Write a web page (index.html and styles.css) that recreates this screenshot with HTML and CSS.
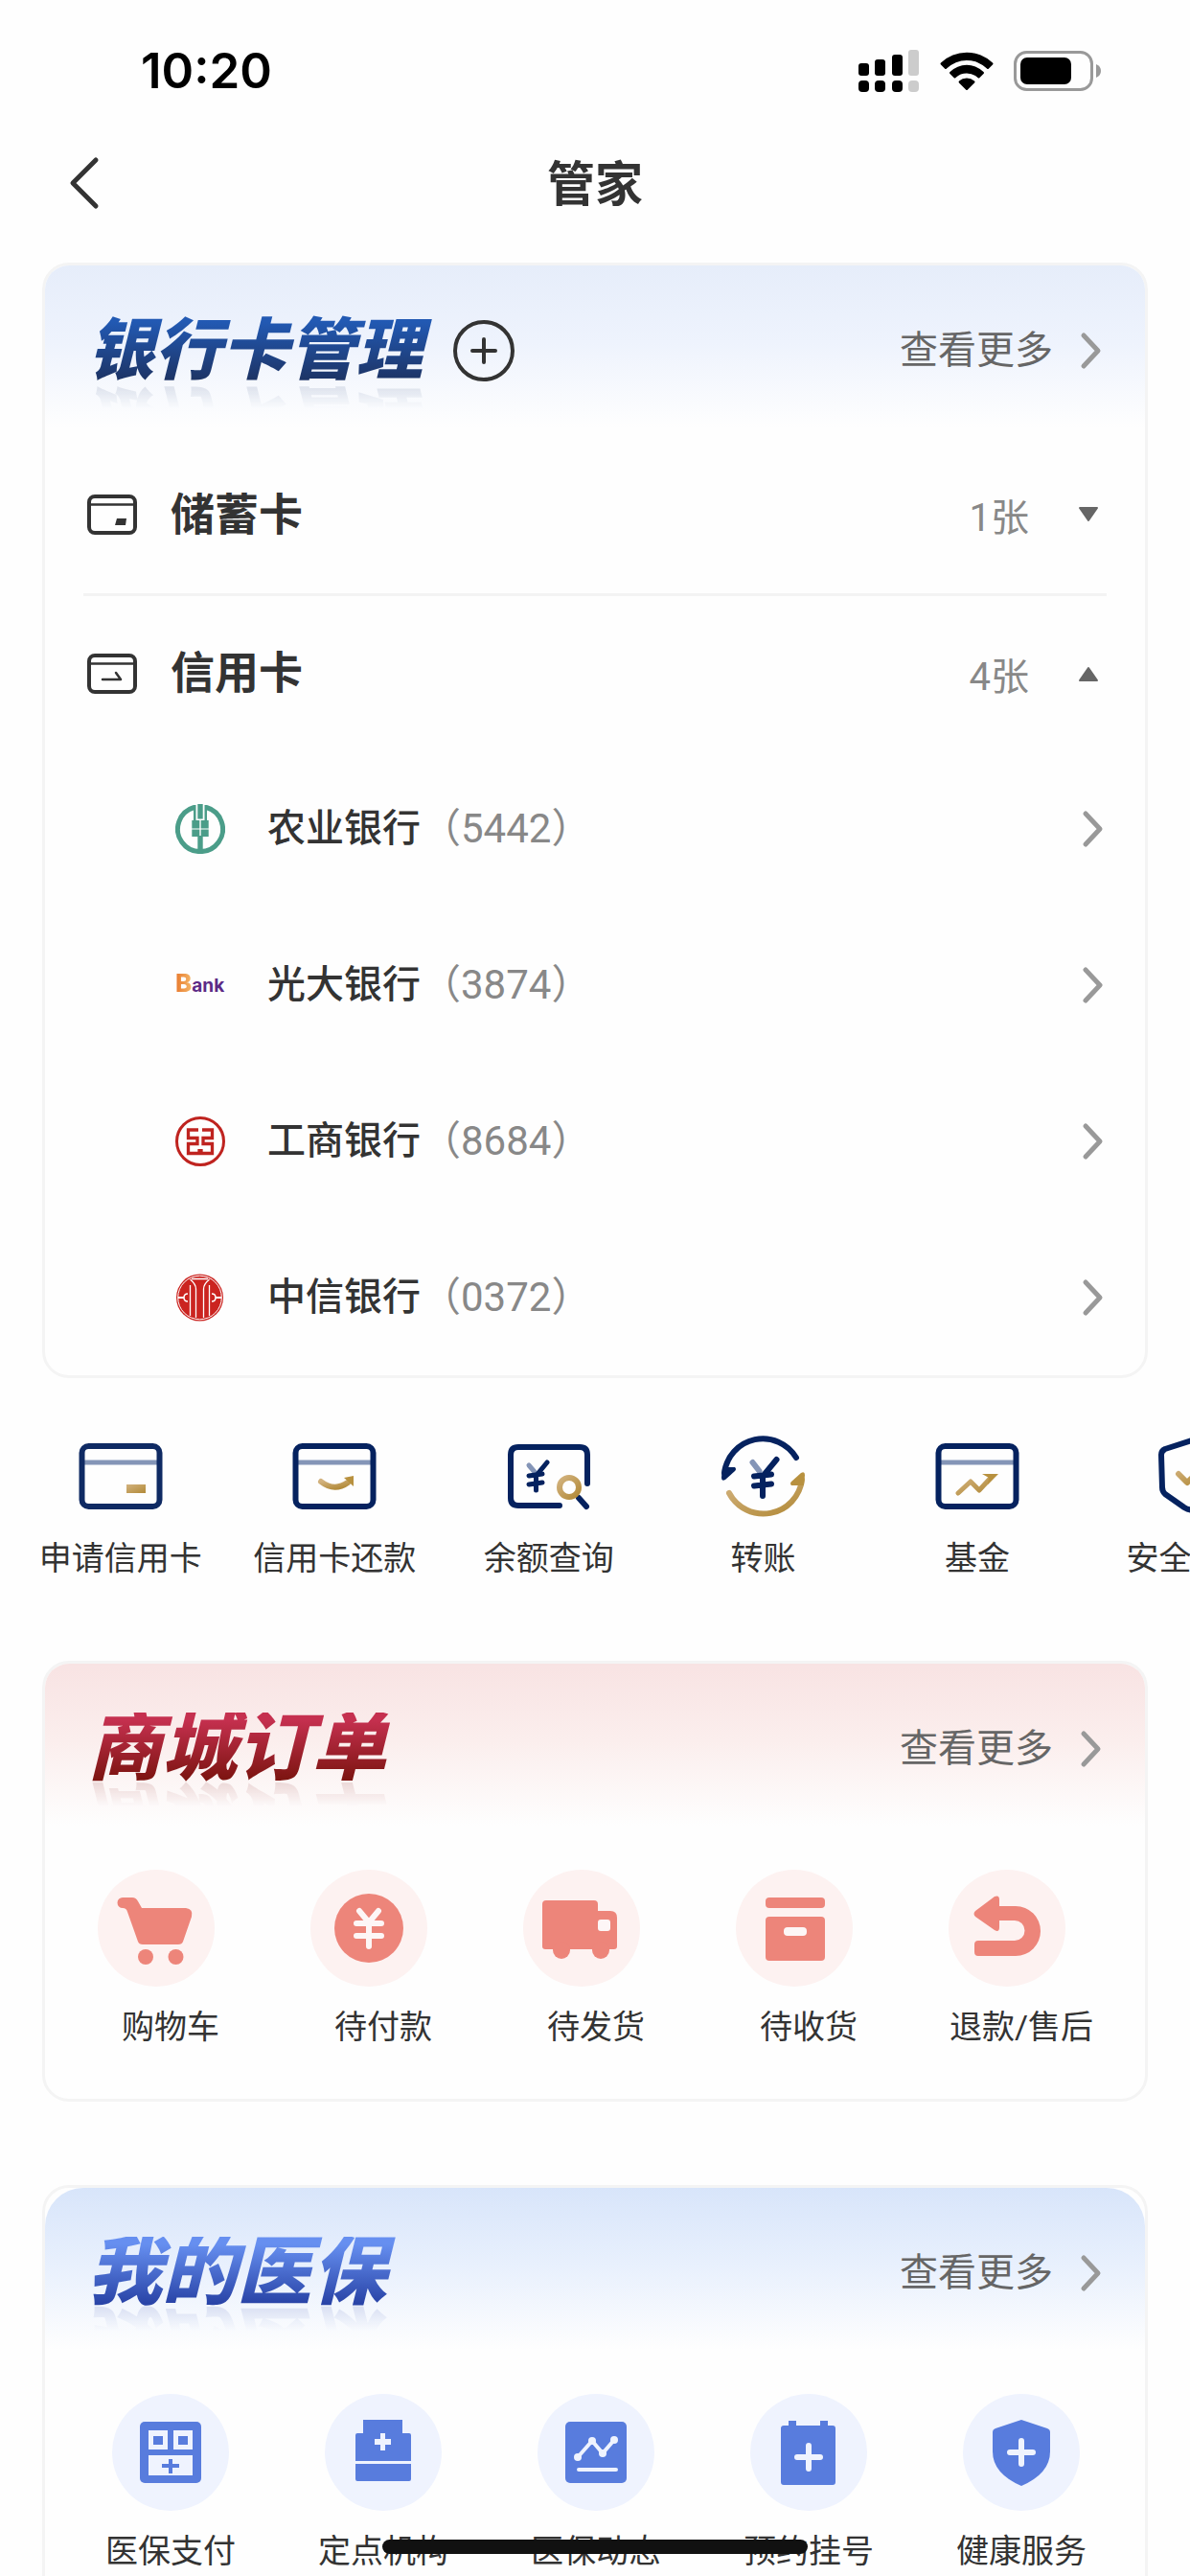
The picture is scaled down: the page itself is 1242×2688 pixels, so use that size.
FILE: index.html
```html
<!DOCTYPE html>
<html lang="zh-CN">

<head>
    <meta charset="UTF-8">
    <meta name="viewport" content="width=device-width, initial-scale=1.0">
    <title>管家</title>
    <link rel="stylesheet" href="styles.css">
</head>

<body>
    <!-- shared gradients and symbols -->
    <svg class="defs" width="0" height="0" aria-hidden="true">
        <defs>
            <linearGradient id="gold" x1="0" y1="0" x2="1" y2="1">
                <stop offset="0" stop-color="#d2b27e" />
                <stop offset="1" stop-color="#b28a38" />
            </linearGradient>
            <symbol id="chevron" viewBox="0 0 24 40">
                <path d="M4 4l15 16L4 36" fill="none" stroke="#999" stroke-width="5" stroke-linecap="round"
                    stroke-linejoin="round" />
            </symbol>
        </defs>
    </svg>

    <div class="screen">
        <!-- Status bar -->
        <div class="status-bar">
            <span class="time">10:20</span>
            <div class="status-icons">
                <svg width="64" height="46" viewBox="0 0 64 46">
                    <rect x="0" y="15" width="11" height="13" rx="3" />
                    <rect x="17" y="11" width="11" height="17" rx="3" />
                    <rect x="35" y="6" width="11" height="22" rx="3" />
                    <rect x="52" y="1" width="11" height="27" rx="3" fill="#ccc" />
                    <rect x="0" y="33" width="11" height="12" rx="4" />
                    <rect x="17" y="33" width="11" height="12" rx="4" />
                    <rect x="35" y="33" width="11" height="12" rx="4" />
                    <rect x="52" y="33" width="11" height="12" rx="4" fill="#ccc" />
                </svg>
                <svg width="56" height="46" viewBox="0 0 56 46">
                    <path d="M1 14.500a39 39 0 0 1 54 0q1 1 0 2l-4 4q-1 1-2 0a30 30 0 0 0-42 0q-1 1-2 0l-4-4q-1-1 0-2z" />
                    <path d="M10.500 24a25 25 0 0 1 35 0q1 1 0 2l-4 4q-1 1-2 0a17 17 0 0 0-23 0q-1 1-2 0l-4-4q-1-1 0-2z" />
                    <path d="M20 33.500a12 12 0 0 1 16 0q1 1 0 2l-7 7q-1 1-2 0l-7-7q-1-1 0-2z" />
                </svg>
                <svg width="92" height="46" viewBox="0 0 92 46">
                    <rect x="1.500" y="3.500" width="80" height="39" rx="12" fill="none" stroke="#999" stroke-width="3" />
                    <rect x="7" y="9" width="53" height="28" rx="7" />
                    <path d="M86 16q5 2 5 7t-5 7z" fill="#999" />
                </svg>
            </div>
        </div>

        <!-- Title bar -->
        <header class="nav">
            <button class="back" type="button" aria-label="返回">
                <svg width="32" height="56" viewBox="0 0 32 56">
                    <path d="M28 4L4 28l24 24" fill="none" stroke="#333" stroke-width="5" stroke-linecap="round"
                        stroke-linejoin="round" />
                </svg>
            </button>
            <h1>管家</h1>
        </header>

        <!-- Bank cards -->
        <section class="card card-bank">
            <div class="card-head">
                <h2 class="card-title">银行卡管理</h2>
                <button class="add" type="button" aria-label="添加">
                    <svg width="64" height="64" viewBox="0 0 64 64">
                        <circle cx="32" cy="32" r="30" fill="none" stroke="#333" stroke-width="4" />
                        <path d="M32 20v24M20 32h24" stroke="#333" stroke-width="4" stroke-linecap="round" />
                    </svg>
                </button>
                <a class="more" href="#">查看更多<svg width="24" height="40"><use href="#chevron" /></svg></a>
            </div>

            <button class="group" type="button">
                <svg width="52" height="42" viewBox="0 0 52 42">
                    <rect x="2" y="2" width="48" height="38" rx="6" fill="none" stroke="#333" stroke-width="4" />
                    <path d="M3 10.500h46" stroke="#333" stroke-width="2.500" />
                    <path d="M31 25h10l-1 7H29z" fill="#333" />
                </svg>
                <span class="group-name">储蓄卡</span>
                <span class="count">1张</span>
                <svg width="24" height="18" viewBox="0 0 24 18">
                    <path d="M3 2h18L12 15z" fill="#666" stroke="#666" stroke-width="2" stroke-linejoin="round" />
                </svg>
            </button>
            <button class="group" type="button">
                <svg width="52" height="42" viewBox="0 0 52 42">
                    <rect x="2" y="2" width="48" height="38" rx="6" fill="none" stroke="#333" stroke-width="4" />
                    <path d="M3 10.500h46" stroke="#333" stroke-width="2.500" />
                    <path d="M16 27h19l-5-7" fill="none" stroke="#333" stroke-width="2.500" stroke-linecap="round"
                        stroke-linejoin="round" />
                </svg>
                <span class="group-name">信用卡</span>
                <span class="count">4张</span>
                <svg width="24" height="18" viewBox="0 0 24 18">
                    <path d="M3 16h18L12 3z" fill="#666" stroke="#666" stroke-width="2" stroke-linejoin="round" />
                </svg>
            </button>

            <a class="bank" href="#">
                <svg width="52" height="52" viewBox="0 0 52 52">
                    <path d="M19.500 3.500a23.500 23.500 0 1 0 13 0" fill="none" stroke="#4b9d89" stroke-width="5" />
                    <g fill="#4b9d89">
                        <path d="M19 1h2.500v16h3.800v8.500h-8V17H19zM33 1h-2.500v16h-3.800v8.500h8V17H33z" />
                        <rect x="23.300" width="5.400" height="15.500" />
                        <rect x="17.300" y="26.500" width="8" height="7.500" />
                        <rect x="26.700" y="26.500" width="8" height="7.500" />
                        <rect x="23.300" y="33" width="5.400" height="17" />
                    </g>
                </svg>
                <span class="bank-name">农业银行</span>
                <span class="bank-no">（5442）</span>
                <svg width="24" height="40"><use href="#chevron" /></svg>
            </a>
            <a class="bank" href="#">
                <span class="everbright"><b>B</b>ank</span>
                <span class="bank-name">光大银行</span>
                <span class="bank-no">（3874）</span>
                <svg width="24" height="40"><use href="#chevron" /></svg>
            </a>
            <a class="bank" href="#">
                <svg width="52" height="52" viewBox="0 0 52 52" fill="none" stroke="#bf231f">
                    <circle cx="26" cy="26" r="24.500" stroke-width="3" />
                    <path d="M24 14H13.500v8.500H23v6h-9.500V38.500h11.500V34M28 14h10.500v8.500H29v6h9.500V38.500H27V34"
                        stroke-width="3.300" />
                </svg>
                <span class="bank-name">工商银行</span>
                <span class="bank-no">（8684）</span>
                <svg width="24" height="40"><use href="#chevron" /></svg>
            </a>
            <a class="bank" href="#">
                <svg width="52" height="52" viewBox="0 0 52 52">
                    <circle cx="25.500" cy="26" r="24.500" fill="#cb2420" />
                    <g fill="none" stroke="#fff">
                        <circle cx="25.500" cy="26" r="22.800" stroke-width="1" />
                        <path d="M15.500 7q6 5 6 10v30M35.500 7q-6 5-6 10v30" stroke-width="1.300" />
                        <path d="M15.500 13v32M35.500 13v32M17 6.500h17" stroke-width="1.300" />
                        <path d="M13 22q-4 0-4 4t4 4M38 22q4 0 4 4t-4 4" stroke-width="1.500" />
                        <path d="M3 26h6M42 26h6" stroke-width="2" />
                    </g>
                </svg>
                <span class="bank-name">中信银行</span>
                <span class="bank-no">（0372）</span>
                <svg width="24" height="40"><use href="#chevron" /></svg>
            </a>
        </section>

        <!-- Quick actions, scrolls sideways -->
        <nav class="actions">
            <a class="action" href="#">
                <svg width="96" height="96" viewBox="0 0 96 96" fill="none">
                    <path d="M10 34h76" stroke="#8495b7" stroke-width="5" />
                    <rect x="7.500" y="17" width="81" height="63" rx="7" stroke="#0f2a63" stroke-width="6" />
                    <rect x="54" y="57" width="20" height="9" fill="url(#gold)" />
                </svg>
                申请信用卡
            </a>
            <a class="action" href="#">
                <svg width="96" height="96" viewBox="0 0 96 96" fill="none">
                    <path d="M10 34h76" stroke="#8495b7" stroke-width="5" />
                    <rect x="7.500" y="17" width="81" height="63" rx="7" stroke="#05225f" stroke-width="6" />
                    <path d="M34 54q14 11 28 1" stroke="url(#gold)" stroke-width="6" stroke-linecap="round" />
                    <path d="M58 50l10-2v11z" fill="#b8913f" />
                </svg>
                信用卡还款
            </a>
            <a class="action" href="#">
                <svg width="96" height="96" viewBox="0 0 96 96" fill="none" stroke="#05225f" stroke-width="5"
                    stroke-linecap="round">
                    <path d="M88 56V26q0-8-8-8H16q-8 0-8 8v45q0 8 8 8h43" stroke-width="6" />
                    <path d="M27 37l6 7" stroke="#8495b7" />
                    <path d="M46 34L34.500 48V63M27 48l14-2M27 57l14-2" />
                    <path d="M79 71l8 9" stroke-width="6" />
                    <circle cx="69" cy="60" r="10" stroke="url(#gold)" stroke-width="6" />
                </svg>
                余额查询
            </a>
            <a class="action" href="#">
                <svg width="96" height="96" viewBox="0 0 96 96" fill="none" stroke="#05225f" stroke-width="6"
                    stroke-linecap="round">
                    <path d="M8 45A40.500 40.500 0 0 1 83 29" />
                    <path d="M6 39h13q2 2 0 4l-10 9q-4 2-4-2z" fill="#05225f" stroke="none" />
                    <path d="M13 66A40.500 40.500 0 0 0 89 52" stroke="url(#gold)" />
                    <path d="M91 58H78q-2-2 0-4l10-9q4-2 4 2z" fill="#b8913f" stroke="none" />
                    <path d="M37.500 34l7 9" stroke="#8495b7" />
                    <path d="M62.500 31L48 48.500V69M39 48.500l18-2M39 58.500l18-2" />
                </svg>
                转账
            </a>
            <a class="action" href="#">
                <svg width="96" height="96" viewBox="0 0 96 96" fill="none">
                    <path d="M10 34h76" stroke="#8495b7" stroke-width="5" />
                    <rect x="7.500" y="17" width="81" height="63" rx="7" stroke="#05225f" stroke-width="6" />
                    <path d="M28 66l13-12 9 9 13-14" stroke="url(#gold)" stroke-width="5" stroke-linecap="round"
                        stroke-linejoin="round" />
                    <path d="M53 46h17L59 57l1-7z" fill="#b8913f" />
                </svg>
                基金
            </a>
            <a class="action" href="#">
                <svg width="96" height="96" viewBox="0 0 96 96" fill="none" stroke-width="6" stroke-linecap="round"
                    stroke-linejoin="round">
                    <path d="M48 11L20 20q-4 2-4 6l1 34q0 4 3 7l20 14q8 5 16 0l20-14q3-3 3-7l1-34q0-4-4-6z"
                        stroke="#05225f" />
                    <path d="M34 46l9 9 19-18" stroke="url(#gold)" />
                </svg>
                安全中心
            </a>
        </nav>

        <!-- Mall orders -->
        <section class="card card-mall">
            <div class="card-head">
                <h2 class="card-title">商城订单</h2>
                <a class="more" href="#">查看更多<svg width="24" height="40"><use href="#chevron" /></svg></a>
            </div>
            <div class="grid">
                <a class="cell" href="#">
                    <svg class="cell-icon" viewBox="0 0 122 122">
                        <path d="M26 29h10q4 0 6 4l4 7h46q8 1 6 9l-9 26q-1 3-5 3H47q-4 0-5-3L31 44q-1-4-5-4a5.500 5.500 0 0 1 0-11z" />
                        <circle cx="50" cy="91" r="8" />
                        <circle cx="81.500" cy="91" r="8" />
                    </svg>
                    <span>购物车</span>
                </a>
                <a class="cell" href="#">
                    <svg class="cell-icon" viewBox="0 0 122 122">
                        <circle cx="61" cy="61" r="36" />
                        <path class="line" d="M51 43l10 12 10-12M61 55v25M48 56h26M48 69h26" />
                    </svg>
                    <span>待付款</span>
                </a>
                <a class="cell" href="#">
                    <svg class="cell-icon" viewBox="0 0 122 122">
                        <path d="M24 32h50q4 0 4 4v7h13q7 0 7 7v30q0 3-3 3H23q-3 0-3-3V36q0-4 4-4z" />
                        <circle cx="40" cy="84" r="9" />
                        <circle cx="81" cy="84" r="9" />
                        <rect class="hole" x="78" y="52" width="13" height="12" rx="3" />
                    </svg>
                    <span>待发货</span>
                </a>
                <a class="cell" href="#">
                    <svg class="cell-icon" viewBox="0 0 122 122">
                        <rect x="31" y="29" width="62" height="11" rx="4" />
                        <rect x="31" y="49" width="62" height="46" rx="4" />
                        <rect class="hole" x="50" y="60" width="24" height="9" rx="4" />
                    </svg>
                    <span>待收货</span>
                </a>
                <a class="cell" href="#">
                    <svg class="cell-icon" viewBox="0 0 122 122">
                        <path d="M28 43l20-15q5-2 5 3v7h17a26 26 0 0 1 0 52H31q-4 0-4-4v-8q0-4 4-4h38a10.500 10.500 0 0 0 0-21H53v7q0 6-5 3L28 49q-3-3 0-6z" />
                    </svg>
                    <span>退款/售后</span>
                </a>
            </div>
        </section>

        <!-- Medical insurance -->
        <section class="card card-medical">
            <div class="card-head">
                <h2 class="card-title">我的医保</h2>
                <a class="more" href="#">查看更多<svg width="24" height="40"><use href="#chevron" /></svg></a>
            </div>
            <div class="grid">
                <a class="cell" href="#">
                    <svg class="cell-icon" viewBox="0 0 122 122">
                        <rect x="29" y="29" width="64" height="64" rx="5" />
                        <path class="hole" d="M38 38h20v20H38zM64 38h20v20H64zM38 64h46v21H38z" />
                        <path d="M43 44h10v9H43zM69 44h10v9H69zM59 68h4v5h7v4h-7v6h-4v-6h-7v-4h7z" />
                    </svg>
                    <span>医保支付</span>
                </a>
                <a class="cell" href="#">
                    <svg class="cell-icon" viewBox="0 0 122 122">
                        <path d="M40 27h41v14h7q2 0 2 2v27H32V43q0-2 2-2h6zM32 73h58v16q0 2-2 2H34q-2 0-2-2z" />
                        <path class="hole" d="M58 41h5v6h6v6h-6v6h-5v-6h-6v-6h6z" />
                    </svg>
                    <span>定点机构</span>
                </a>
                <a class="cell" href="#">
                    <svg class="cell-icon" viewBox="0 0 122 122">
                        <rect x="29" y="29" width="64" height="64" rx="5" />
                        <path class="line thin" d="M42 66l15-17 11 13 12-14M43 79h39" />
                        <g class="hole">
                            <circle cx="42" cy="66" r="4" />
                            <circle cx="57" cy="49" r="4" />
                            <circle cx="68" cy="62" r="4" />
                            <circle cx="80" cy="48" r="4" />
                        </g>
                    </svg>
                    <span>医保动态</span>
                </a>
                <a class="cell" href="#">
                    <svg class="cell-icon" viewBox="0 0 122 122">
                        <path d="M35 33h5v-5h8v5h25v-5h8v5h5q3 0 3 3v56q0 3-3 3H35q-3 0-3-3V36q0-3 3-3z" />
                        <path class="line" d="M61 54v24M49 66h24" />
                    </svg>
                    <span>预约挂号</span>
                </a>
                <a class="cell" href="#">
                    <svg class="cell-icon" viewBox="0 0 122 122">
                        <path d="M61 27l27 9q3 1 3 4v20q0 23-30 36Q31 83 31 60V40q0-3 3-4z" />
                        <path class="line" d="M61 49v24M49 61h24" />
                    </svg>
                    <span>健康服务</span>
                </a>
            </div>
        </section>
    </div>

    <div class="home-indicator"></div>
</body>

</html>
```
FILE: styles.css
```css
/* styles.css */
* {
    box-sizing: border-box;
    margin: 0;
    padding: 0;
}

body {
    font-family: Roboto, "Noto Sans CJK SC", sans-serif;
    line-height: 1.5;
    background-color: #fefefe;
    color: #333;
}

a {
    color: inherit;
    text-decoration: none;
}

button {
    font-family: inherit;
    line-height: inherit;
    color: inherit;
    background: none;
    border: none;
    cursor: pointer;
}

svg {
    display: block;
    flex-shrink: 0;
}

.defs {
    position: absolute;
}

.screen {
    height: 100vh;
    overflow: hidden;
}

/* status bar */
.status-bar {
    display: flex;
    justify-content: space-between;
    align-items: center;
    height: 148px;
    padding: 0 92px 0 147px;
}

.time {
    font-family: Inter, sans-serif;
    font-size: 51px;
    font-weight: 600;
    color: #000;
}

.status-icons {
    display: flex;
    align-items: center;
    gap: 21px;
}

/* title bar */
.nav {
    display: grid;
    grid-template-columns: 1fr auto 1fr;
    align-items: center;
    height: 86px;
    padding: 0 72px;
}

.nav h1 {
    padding-top: 5px;
    font-size: 50px;
    font-weight: 700;
}

.back {
    justify-self: start;
}

/* cards */
.card {
    margin: 40px 44px 0 44px;
    border: 3px solid #f4f4f4;
    border-radius: 28px;
    overflow: hidden;
}

.card-head {
    display: flex;
    align-items: center;
    height: 178px;
    padding: 0 44px;
}

.card-bank .card-head {
    background: linear-gradient(#e6edfa, #eef3fd 45%, #fefefe 95%);
}

.card-mall .card-head {
    background: linear-gradient(#f8e3e3, #fbeeed 45%, #fefefe 95%);
}

.card-medical .card-head {
    background: linear-gradient(#d8e5fa, #e8f0fd 45%, #fefefe 95%);
    border-radius: 40px 40px 0 0;
}

.card-title {
    font-size: 78px;
    font-weight: 900;
    font-style: italic;
    line-height: 76px;
    padding-right: 16px;
    color: transparent;
    background-clip: text;
    -webkit-background-clip: text;
    -webkit-box-reflect: below -8px linear-gradient(transparent 60%, rgba(0, 0, 0, 0.15));
}

.card-bank .card-title {
    font-size: 70px;
    background-image: linear-gradient(#2259b3 10%, #1d3465 90%);
}

.card-mall .card-title {
    background-image: linear-gradient(#c5304f 10%, #7e1512 90%);
}

.card-medical .card-title {
    background-image: linear-gradient(#668ff0 10%, #2a45a8 90%);
}

.add {
    margin-left: 16px;
}

.more {
    display: flex;
    align-items: center;
    gap: 28px;
    margin-left: auto;
    font-size: 40px;
    color: #666;
}

/* card groups */
.group {
    display: flex;
    align-items: center;
    width: 100%;
    height: 164px;
    padding: 0 47px 0 44px;
    text-align: left;
    position: relative;
}

.group + .group {
    padding-top: 3px;
}

.group + .group::before {
    content: "";
    position: absolute;
    top: 0;
    left: 40px;
    right: 40px;
    height: 3px;
    background-color: #f3f3f3;
}

.group-name {
    flex: 1;
    margin-left: 35px;
    font-size: 46px;
    font-weight: 700;
}

.count {
    padding-top: 8px;
    margin-right: 50px;
    font-size: 40px;
    color: #888;
}

.bank {
    display: flex;
    align-items: center;
    height: 163px;
    padding: 0 42px 0 136px;
    font-size: 40px;
}

.bank-name {
    margin-left: 44px;
    font-weight: 500;
}

.bank-no {
    flex: 1;
    font-size: 42px;
    color: #888;
}

.everbright {
    width: 52px;
    font-family: Inter, sans-serif;
    font-size: 19px;
    font-weight: 700;
    line-height: 28px;
    color: #5c2a86;
    white-space: nowrap;
}

.everbright b {
    font-size: 26px;
    font-weight: 800;
    color: transparent;
    background: linear-gradient(90deg, #e8782c, #f4b668);
    background-clip: text;
    -webkit-background-clip: text;
}

/* quick actions */
.actions {
    display: flex;
    margin-top: 54px;
    padding-left: 14px;
    overflow: hidden;
}

.action {
    display: flex;
    flex: 0 0 18vw;
    flex-direction: column;
    align-items: center;
    gap: 14px;
    font-size: 34px;
    line-height: 48px;
    white-space: nowrap;
}

.card-mall {
    margin-top: 83px;
}

.card-medical {
    margin-top: 87px;
}

/* icon grids */
.grid {
    display: grid;
    grid-template-columns: repeat(5, 1fr);
    padding: 37px 18px 51px 20px;
}

.cell {
    display: flex;
    flex-direction: column;
    align-items: center;
    gap: 18px;
    font-size: 34px;
    line-height: 48px;
    white-space: nowrap;
}

.cell-icon {
    width: 122px;
    height: 122px;
    border-radius: 50%;
}

.card-mall .cell-icon {
    margin-right: 30px;
    background-color: #fdf2f1;
    fill: #ed857a;
}

.card-medical .cell-icon {
    background-color: #eff3fe;
    fill: #587cdd;
}

.cell-icon .hole {
    fill: #fdf6f6;
}

.cell-icon .line {
    fill: none;
    stroke: #fdf6f6;
    stroke-width: 6;
    stroke-linecap: round;
    stroke-linejoin: round;
}

.card-medical .hole {
    fill: #eff3fe;
}

.card-medical .line {
    stroke: #eff3fe;
}

.cell-icon .thin {
    stroke-width: 4;
}

.home-indicator {
    position: fixed;
    bottom: 23px;
    left: 50%;
    width: 444px;
    height: 15px;
    margin-left: -222px;
    border-radius: 8px;
    background-color: #111;
}
```
